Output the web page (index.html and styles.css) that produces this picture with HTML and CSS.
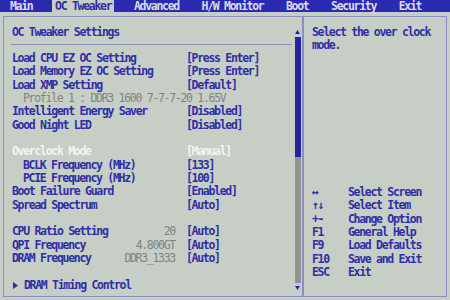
FILE: index.html
```html
<!doctype html>
<html>
    <head>
        <link rel="stylesheet" href="styles.css">
    </head>
    <body>
        <nav class="menubar">
            <span class="tab">Main</span>
            <span class="tab active">OC Tweaker</span>
            <span class="tab">Advanced</span>
            <span class="tab">H/W Monitor</span>
            <span class="tab">Boot</span>
            <span class="tab">Security</span>
            <span class="tab">Exit</span>
        </nav>
        <div class="frame">
            <section class="settings">
                <div class="list">
                    <h1 class="title">OC Tweaker Settings</h1>
                    <div class="row"><span class="label">Load CPU EZ OC Setting</span><span class="value">[Press Enter]</span></div>
                    <div class="row"><span class="label">Load Memory EZ OC Setting</span><span class="value">[Press Enter]</span></div>
                    <div class="row"><span class="label">Load XMP Setting</span><span class="value">[Default]</span></div>
                    <div class="row info"><span class="label sub">Profile 1 : DDR3 1600 7-7-7-20 1.65V</span></div>
                    <div class="row"><span class="label">Intelligent Energy Saver</span><span class="value">[Disabled]</span></div>
                    <div class="row"><span class="label">Good Night LED</span><span class="value">[Disabled]</span></div>
                    <div class="row blank"></div>
                    <div class="row selected"><span class="label">Overclock Mode</span><span class="value">[Manual]</span></div>
                    <div class="row"><span class="label sub">BCLK Frequency (MHz)</span><span class="value">[133]</span></div>
                    <div class="row"><span class="label sub">PCIE Frequency (MHz)</span><span class="value">[100]</span></div>
                    <div class="row"><span class="label">Boot Failure Guard</span><span class="value">[Enabled]</span></div>
                    <div class="row"><span class="label">Spread Spectrum</span><span class="value">[Auto]</span></div>
                    <div class="row blank"></div>
                    <div class="row"><span class="label">CPU Ratio Setting</span><span class="current">20</span><span class="value">[Auto]</span></div>
                    <div class="row"><span class="label">QPI Frequency</span><span class="current">4.800GT</span><span class="value">[Auto]</span></div>
                    <div class="row"><span class="label">DRAM Frequency</span><span class="current">DDR3_1333</span><span class="value">[Auto]</span></div>
                    <div class="row blank"></div>
                    <div class="row"><span class="label"><svg class="arrow" width="5" height="7" viewBox="0 0 5 7"><path d="M0 0 L5 3.5 L0 7 Z" fill="#2e2ea6"/></svg>DRAM Timing Control</span></div>
                </div>
                <div class="scrollbar">
                    <svg class="sarrow" width="5" height="5" viewBox="0 0 5 5"><path d="M0 4 L2.5 0 L5 4 Z" fill="#2424a0"/></svg>
                    <div class="track"><div class="thumb"></div></div>
                    <svg class="sarrow" width="5" height="5" viewBox="0 0 5 5"><path d="M0 1 L5 1 L2.5 5 Z" fill="#2424a0"/></svg>
                </div>
            </section>
            <aside class="help">
                <p class="desc">Select the over clock mode.</p>
                <ul class="keys">
                    <li><span class="key">&#8596;</span>Select Screen</li>
                    <li><span class="key">&#8593;&#8595;</span>Select Item</li>
                    <li><span class="key">+-</span>Change Option</li>
                    <li><span class="key">F1</span>General Help</li>
                    <li><span class="key">F9</span>Load Defaults</li>
                    <li><span class="key">F10</span>Save and Exit</li>
                    <li><span class="key">ESC</span>Exit</li>
                </ul>
            </aside>
        </div>
    </body>
</html>
```

FILE: styles.css
```css
* {
    margin: 0;
    padding: 0;
    box-sizing: border-box;
}
body {
    width: 450px;
    height: 300px;
    overflow: hidden;
    background: #c6cec6;
    color: #2e2ea6;
    font-family: "DejaVu Sans Mono", "Liberation Mono", monospace;
    font-size: 11.5px;
    font-weight: bold;
    letter-spacing: -1.3px;
}
.menubar {
    height: 12px;
    background: #2a2ab2;
    display: flex;
    gap: 16.6px;
    padding-left: 7px;
    line-height: 12px;
}
.tab {
    color: #d8dce8;
    padding: 0 3px;
}
.tab.active {
    background: #c6cec6;
    color: #2e2ea6;
}
.frame {
    margin: 4px 3px 0 3px;
    height: 281px;
    border: 1px solid #8a8ec4;
    display: flex;
}
.settings {
    width: 300px;
    display: flex;
    border-right: 2px solid #8a8ec4;
}
.list {
    flex: 1;
    padding: 9px 0 0 7px;
}
.title {
    font-size: inherit;
    font-weight: inherit;
    line-height: 13px;
    padding-left: 1px;
    padding-bottom: 5px;
    border-bottom: 1px solid #8a8ec4;
    margin-bottom: 7px;
    margin-right: 2px;
}
.row {
    display: flex;
    height: 13.35px;
    line-height: 13.35px;
    padding-left: 1px;
}
.label {
    width: 174px;
    white-space: nowrap;
}
.label.sub {
    padding-left: 11px;
}
.info .label {
    color: #7e8484;
    font-weight: normal;
}
.selected {
    color: #f4f4f4;
}
.current {
    margin-left: -174px;
    flex: 0 0 163px;
    text-align: right;
    color: #7e8484;
    font-weight: normal;
}
.current + .value {
    margin-left: 11px;
}
.arrow {
    margin: 0 6px 0 1px;
    vertical-align: -0.5px;
}
.scrollbar {
    width: 7px;
    margin-right: 1px;
    display: flex;
    flex-direction: column;
    align-items: center;
    padding: 13px 0 6px;
    gap: 2px;
}
.track {
    flex: 1;
    width: 6px;
    background: #8e948e;
}
.thumb {
    height: 120px;
    background: #2424a0;
}
.help {
    flex: 1;
    padding: 9px 0 0 8px;
    display: flex;
    flex-direction: column;
}
.desc {
    line-height: 13px;
    width: 122px;
}
.keys {
    list-style-type: none;
    margin-top: 134px;
}
.keys li {
    line-height: 13.35px;
    height: 13.35px;
    display: flex;
}
.key {
    width: 36px;
}
```
